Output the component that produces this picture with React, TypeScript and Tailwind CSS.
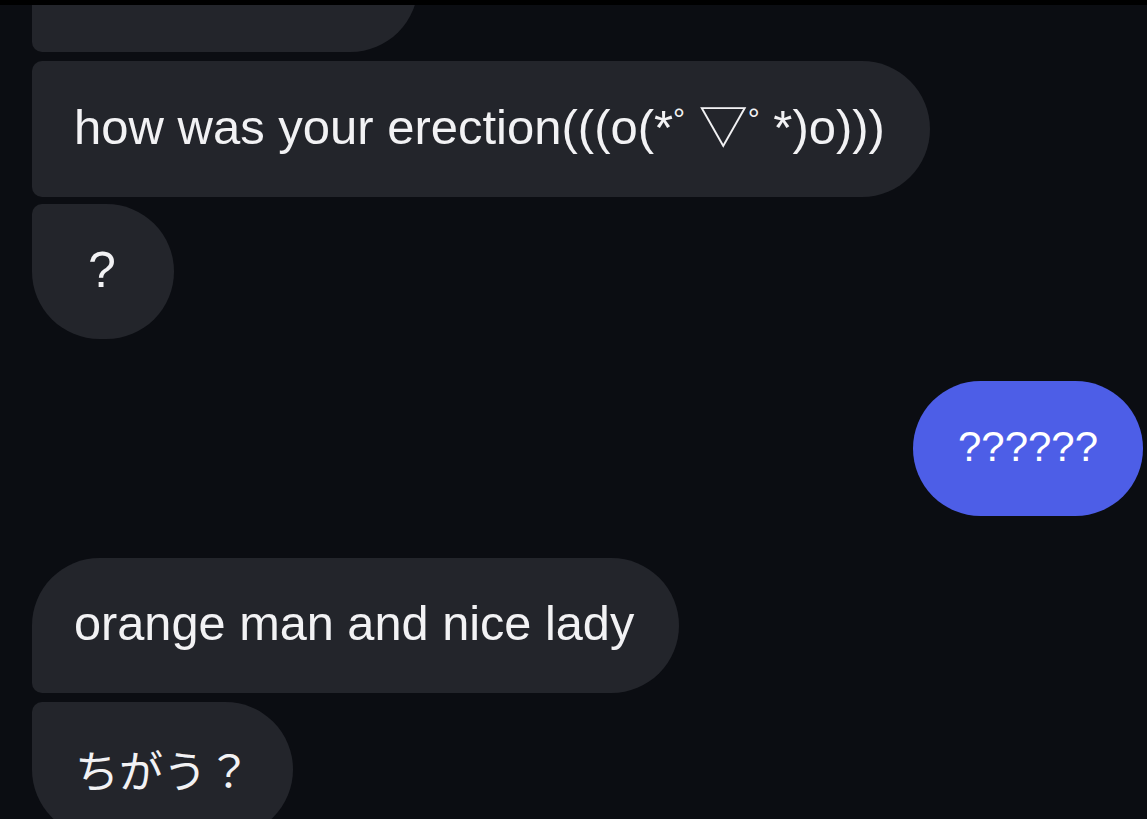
import React from "react";

const font = { fontFamily: '"Liberation Sans", Arial, "Noto Sans CJK JP", sans-serif' };

function Deg() {
  return <span className="text-[30px] align-[0.5em] leading-none">°</span>;
}

export default function App() {
  return (
    <div
      className="w-[1147px] h-[819px] overflow-hidden bg-[#0b0d12] text-[#f2f2f4] flex flex-col"
      style={font}
    >
      <div className="h-[5px] shrink-0 bg-black" />

      {/* partially visible first bubble */}
      <div className="h-[47px] shrink-0 overflow-hidden flex items-end pl-[32px]">
        <div className="h-[135px] w-[386px] shrink-0 bg-[#23252b] rounded-bl-[10px] rounded-r-[67.5px]" />
      </div>

      <div className="mt-[9px] ml-[32px] self-start h-[136px] w-[898px] shrink-0 bg-[#23252b] rounded-l-[10px] rounded-r-[68px] flex items-center pl-[42px]">
        <span className="text-[49px] leading-none whitespace-nowrap -mt-[4px]">
          how was your erection(((o(*<Deg /> ▽<Deg /> *)o)))
        </span>
      </div>

      <div className="mt-[7px] ml-[32px] self-start h-[135px] w-[142px] shrink-0 bg-[#23252b] rounded-tl-[10px] rounded-bl-[67.5px] rounded-r-[67.5px] flex items-center justify-center">
        <span className="text-[50px] leading-none -mt-[4px] pr-[2px]">?</span>
      </div>

      <div className="mt-[42px] mr-[4px] self-end h-[135px] w-[230px] shrink-0 bg-[#4d5ee7] rounded-full flex items-center justify-center">
        <span className="text-[42px] leading-none -mt-[4px] text-white">??????</span>
      </div>

      <div className="mt-[42px] ml-[32px] self-start h-[135px] w-[647px] shrink-0 bg-[#23252b] rounded-tl-[67.5px] rounded-bl-[10px] rounded-r-[67.5px] flex items-center pl-[42px]">
        <span className="text-[48.7px] leading-none whitespace-nowrap -mt-[4px]">orange man and nice lady</span>
      </div>

      <div className="mt-[9px] ml-[32px] self-start h-[135px] w-[261px] shrink-0 bg-[#23252b] rounded-tl-[10px] rounded-bl-[67.5px] rounded-r-[67.5px] flex items-center pl-[43px]">
        <span
          className="text-[44px] leading-none whitespace-nowrap -mt-[2px]"
          style={{ fontFamily: '"Noto Sans CJK JP", sans-serif' }}
        >
          ちがう？
        </span>
      </div>
    </div>
  );
}
